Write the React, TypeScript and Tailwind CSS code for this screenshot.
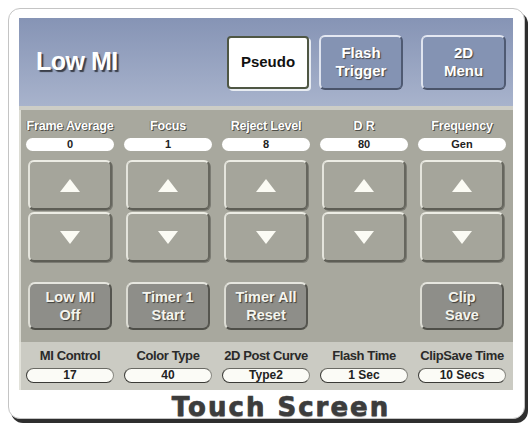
import React from 'react';

const font = { fontFamily: '"Liberation Sans", Arial, sans-serif' };

const knobs = [
  { label: 'Frame Average', value: '0' },
  { label: 'Focus', value: '1' },
  { label: 'Reject Level', value: '8' },
  { label: 'D R', value: '80' },
  { label: 'Frequency', value: 'Gen' },
];

const readouts = [
  { label: 'MI Control', value: '17' },
  { label: 'Color Type', value: '40' },
  { label: '2D Post Curve', value: 'Type2' },
  { label: 'Flash Time', value: '1 Sec' },
  { label: 'ClipSave Time', value: '10 Secs' },
];

const actions: ([string, string] | null)[] = [
  ['Low MI', 'Off'],
  ['Timer 1', 'Start'],
  ['Timer All', 'Reset'],
  null,
  ['Clip', 'Save'],
];

function Triangle({ down }: { down?: boolean }) {
  return (
    <svg width="22" height="15" viewBox="0 0 22 15">
      <polygon
        points={down ? '1,1 21,1 11,14' : '11,1 21,14 1,14'}
        fill="#fbfbf4"
      />
    </svg>
  );
}

function StepButton({ down }: { down?: boolean }) {
  return (
    <div className="w-[84px] h-[50px] mx-auto flex items-center justify-center rounded-[6px] bg-[#a5a59b] border-2 border-t-[#ecece4] border-l-[#e4e4dc] border-r-[#66665e] border-b-[#5e5e56] shadow-[1px_1px_0_#7c7c74]">
      <Triangle down={down} />
    </div>
  );
}

export default function App() {
  return (
    <div className="w-[532px] h-[429px] bg-white pl-[8px] pt-[8px]" style={font}>
      <div className="w-[517px] h-[411px] rounded-[12px] border border-[#c4c4c4] bg-white shadow-[3px_4px_0_#2e2e2e] pl-[10px] pt-[9px]">
        <div className="w-[494px] flex flex-col">
          {/* title bar */}
          <div className="h-[88px] flex items-center bg-gradient-to-b from-[#8694b5] to-[#a8b3cc] pr-[7px]">
            <div className="flex-1 pl-[17px] text-[25px] font-bold text-white tracking-[-0.5px] [text-shadow:2px_2px_1px_#3a3f4a]">
              Low MI
            </div>
            <div className="w-[82px] h-[53px] flex items-center justify-center bg-white rounded-[4px] border-2 border-[#4f5744] shadow-[2px_2px_0_#e8ecf2] text-[15px] font-bold text-[#111]">
              Pseudo
            </div>
            <div className="ml-[10px] w-[84px] h-[55px] flex items-center justify-center text-center leading-[18px] bg-[#8493b3] rounded-[6px] border-2 border-t-[#e4e8f2] border-l-[#dfe4ef] border-r-[#4f5a72] border-b-[#4a546a] text-[15px] font-bold text-white [text-shadow:1px_1px_1px_#444]">
              Flash
              <br />
              Trigger
            </div>
            <div className="ml-[18px] w-[85px] h-[55px] flex items-center justify-center text-center leading-[18px] bg-[#8493b3] rounded-[6px] border-2 border-t-[#e4e8f2] border-l-[#dfe4ef] border-r-[#4f5a72] border-b-[#4a546a] text-[15px] font-bold text-white [text-shadow:1px_1px_1px_#444]">
              2D
              <br />
              Menu
            </div>
          </div>
          <div className="h-[4px] bg-[#cdcdc6]" />

          {/* adjustment panel */}
          <div className="h-[232px] bg-[#a8a89e] border-l-2 border-[#dcdcd4] px-[5px] pt-[9px]">
            <div className="grid grid-cols-[repeat(5,88px)] gap-x-[10px]">
              {knobs.map((k) => (
                <div key={k.label} className="flex flex-col">
                  <div className="h-[14px] text-center text-[12.5px] font-bold leading-[14px] text-white tracking-[-0.2px] whitespace-nowrap [text-shadow:1px_1px_0_#4f4f48,-1px_0_0_#77776f]">
                    {k.label}
                  </div>
                  <div className="mt-[5px] h-[13px] rounded-full bg-white text-center text-[11px] font-bold leading-[13px] text-[#222]">
                    {k.value}
                  </div>
                  <div className="mt-[9px] flex flex-col gap-[2px]">
                    <StepButton />
                    <StepButton down />
                  </div>
                </div>
              ))}
            </div>
            <div className="mt-[20px] grid grid-cols-[repeat(5,88px)] gap-x-[10px]">
              {actions.map((a, i) =>
                a ? (
                  <div
                    key={i}
                    className="w-[84px] h-[48px] mx-auto flex items-center justify-center text-center leading-[18px] rounded-[7px] bg-[#8e8e89] border-2 border-t-[#e6e6df] border-l-[#dcdcd4] border-r-[#55554f] border-b-[#4e4e48] text-[14.5px] font-bold text-[#f4f4ee] [text-shadow:1px_1px_1px_#3c3c38]"
                  >
                    {a[0]}
                    <br />
                    {a[1]}
                  </div>
                ) : (
                  <div key={i} />
                )
              )}
            </div>
          </div>

          {/* readouts */}
          <div className="h-[48px] bg-[#cbcbc3] border-l-2 border-[#e2e2da] px-[5px] pt-[6px]">
            <div className="grid grid-cols-[repeat(5,88px)] gap-x-[10px]">
              {readouts.map((r) => (
                <div key={r.label} className="flex flex-col">
                  <div className="h-[15px] text-center text-[13px] font-bold leading-[15px] text-[#2a2a2a] tracking-[-0.4px] whitespace-nowrap">
                    {r.label}
                  </div>
                  <div className="mt-[5px] h-[15px] rounded-full bg-[#fbfbf6] border border-[#3a3a36] border-t-[#6a6a64] border-r-[#8a8a84] text-center text-[12px] font-bold leading-[13px] text-[#222]">
                    {r.value}
                  </div>
                </div>
              ))}
            </div>
          </div>

          <div
            className="h-[32px] pt-[3px] pl-[30px] flex items-center justify-center text-[26px] font-bold tracking-[2px] text-[#3c3c3c] [-webkit-text-stroke:0.6px_#3c3c3c] [text-shadow:0_1px_1px_#999]"
            style={{ fontFamily: '"DejaVu Sans", Verdana, sans-serif' }}
          >
            Touch Screen
          </div>
        </div>
      </div>
    </div>
  );
}
